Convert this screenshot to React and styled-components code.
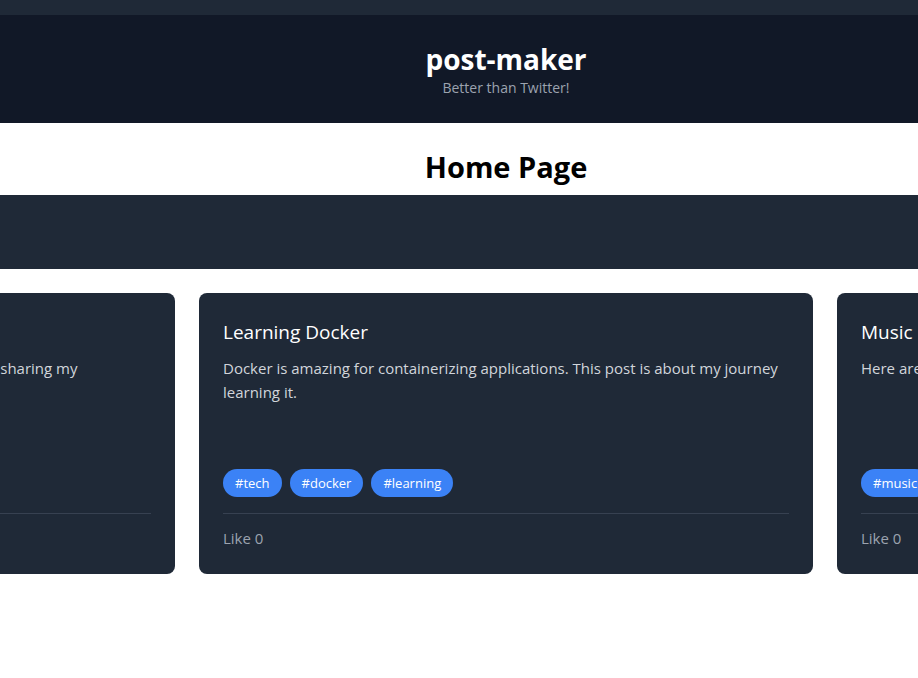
import React from "react";
import styled, { createGlobalStyle } from "styled-components";

const Global = createGlobalStyle`
  html, body { margin: 0; padding: 0; background: #ffffff; overflow: hidden; }
  body { font-family: "Open Sans", "Noto Sans", sans-serif; }
  * { box-sizing: border-box; }
`;

const Page = styled.div`
  width: 1012px;
  display: flex;
  flex-direction: column;
`;

const TopBar = styled.div`
  height: 15px;
  background: #1f2937;
`;

const Header = styled.header`
  height: 108px;
  background: #111827;
  display: flex;
  flex-direction: column;
  align-items: center;
  justify-content: center;
  gap: 3px;
  padding-top: 2px;
`;

const Brand = styled.h1`
  margin: 0;
  color: #ffffff;
  font-size: 28px;
  font-weight: 700;
  line-height: 32px;
`;

const Tagline = styled.p`
  margin: 0;
  color: #9ca3af;
  font-size: 14px;
  line-height: 20px;
`;

const TitleBand = styled.div`
  height: 72px;
  display: flex;
  align-items: center;
  justify-content: center;
  padding-top: 16px;
`;

const PageTitle = styled.h2`
  margin: 0;
  color: #000000;
  font-size: 29px;
  font-weight: 700;
  line-height: 36px;
`;

const NavBand = styled.div`
  height: 74px;
  background: #1f2937;
`;

const Track = styled.div`
  display: flex;
  justify-content: center;
  gap: 24px;
  padding-top: 24px;
`;

const Card = styled.article`
  flex: 0 0 614px;
  height: 281px;
  background: #1f2937;
  border-radius: 8px;
  padding: 26px 24px 0;
  display: flex;
  flex-direction: column;
`;

const CardTitle = styled.h3`
  margin: 0;
  color: #ffffff;
  font-size: 19px;
  font-weight: 400;
  line-height: 26px;
`;

const CardBody = styled.p`
  margin: 11px 0 0;
  color: #d1d5db;
  font-size: 15px;
  line-height: 24px;
  flex: 1;
`;

const Tags = styled.div`
  display: flex;
  gap: 8px;
  padding-bottom: 16px;
  border-bottom: 1px solid #374151;
`;

const Tag = styled.span`
  background: #3b82f6;
  color: #ffffff;
  font-size: 13px;
  line-height: 28px;
  height: 28px;
  padding: 0 12px;
  border-radius: 14px;
`;

const Footer = styled.div`
  height: 60px;
  display: flex;
  align-items: center;
  padding-bottom: 12px;
  color: #9ca3af;
  font-size: 15px;
`;

const posts = [
  {
    title: "My First Post",
    body: "Hello everyone! This is my first post and I'm excited to start sharing my experiences with all of you.",
    tags: ["intro"],
  },
  {
    title: "Learning Docker",
    body: "Docker is amazing for containerizing applications. This post is about my journey learning it.",
    tags: ["tech", "docker", "learning"],
  },
  {
    title: "Music Recommendations",
    body: "Here are some of my favorite albums from this year.",
    tags: ["music", "albums"],
  },
];

export default function App() {
  return (
    <>
      <Global />
      <Page>
        <TopBar />
        <Header>
          <Brand>post-maker</Brand>
          <Tagline>Better than Twitter!</Tagline>
        </Header>
        <TitleBand>
          <PageTitle>Home Page</PageTitle>
        </TitleBand>
        <NavBand />
        <Track>
          {posts.map((p) => (
            <Card key={p.title}>
              <CardTitle>{p.title}</CardTitle>
              <CardBody>{p.body}</CardBody>
              <Tags>
                {p.tags.map((t) => (
                  <Tag key={t}>#{t}</Tag>
                ))}
              </Tags>
              <Footer>Like 0</Footer>
            </Card>
          ))}
        </Track>
      </Page>
    </>
  );
}
